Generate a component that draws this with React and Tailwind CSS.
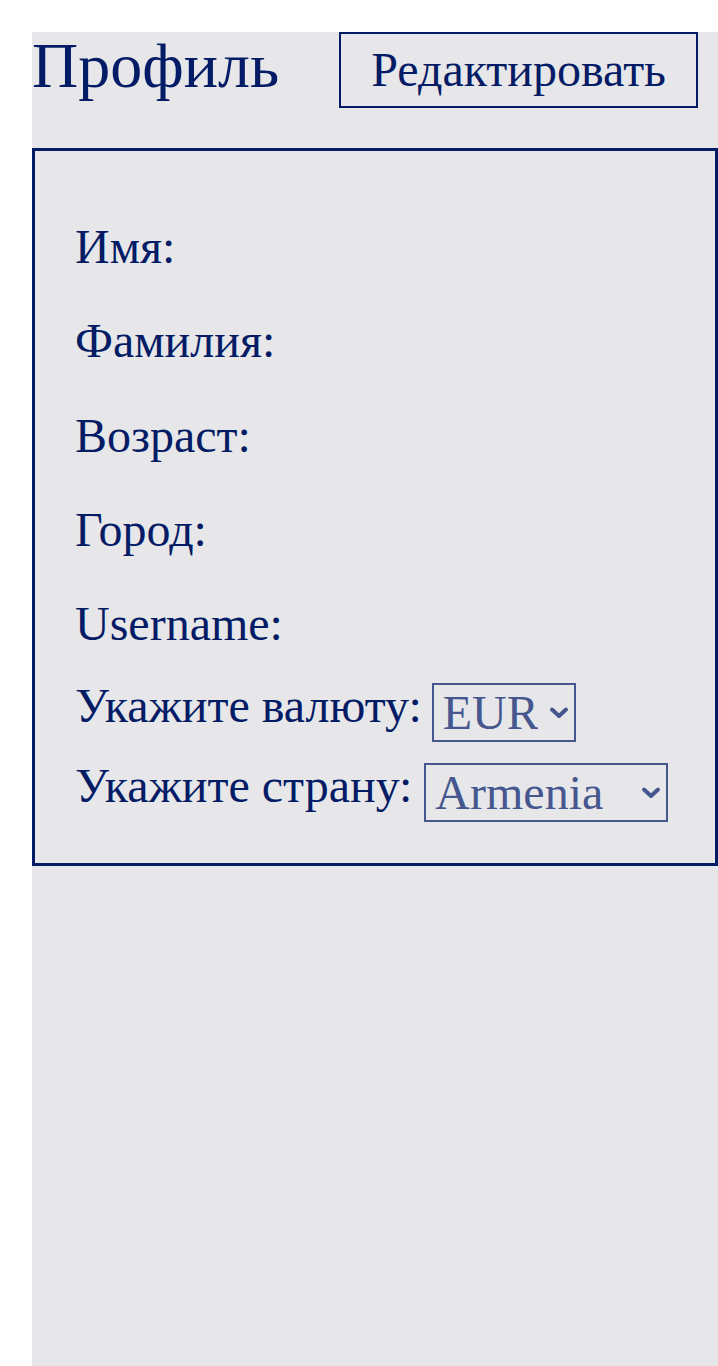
import React from 'react';

const navy = 'text-[#041b65]';

function Field({ label }) {
    return (
        <div className="h-[55px] leading-[55px] mb-[39.3px]">{label}</div>
    );
}

function Chevron() {
    return (
        <svg width="20" height="13" viewBox="0 0 20 13" className="pointer-events-none absolute right-[7px] top-1/2 -translate-y-1/2">
            <path d="M3 3 L10 9.5 L17 3" fill="none" stroke="#46578f" strokeWidth="4" strokeLinecap="round" strokeLinejoin="round" />
        </svg>
    );
}

function Picker({ value, options, width }) {
    return (
        <div className={`relative ${width}`}>
            <select
                defaultValue={value}
                className="block appearance-none w-full h-[59px] border-2 border-[#46578f] bg-transparent text-[#46578f] text-[48px] leading-[55px] pl-[9px] pr-[36px] outline-none"
                style={{ fontFamily: '"Liberation Serif", "Times New Roman", serif' }}
            >
                {options.map((o) => (
                    <option key={o} value={o}>{o}</option>
                ))}
            </select>
            <Chevron />
        </div>
    );
}

export default function App() {
    return (
        <div className="bg-white min-h-screen pt-8 pl-8" style={{ fontFamily: '"Liberation Serif", "Times New Roman", serif' }}>
            <div className={`bg-[#e7e7ea] min-h-[1334px] ${navy}`}>
                <header className="flex justify-between items-start pr-[20px]">
                    <h1 className="text-[64px] leading-none pt-[2px]">Профиль</h1>
                    <button className="border-2 border-[#041b65] px-[30px] py-[8px] text-[48px] leading-[56px]">
                        Редактировать
                    </button>
                </header>

                <section className="mt-[40px] border-[3px] border-[#041b65] pl-[40px] pt-[68px] pb-[41px] text-[48px]">
                    <Field label="Имя:" />
                    <Field label="Фамилия:" />
                    <Field label="Возраст:" />
                    <Field label="Город:" />
                    <div className="h-[55px] leading-[55px]">Username:</div>

                    <div className="flex items-end gap-[10px] mt-[27px]">
                        <span className="leading-[55px] mb-[9px]">Укажите валюту:</span>
                        <Picker value="EUR" options={['EUR', 'USD', 'RUB', 'AMD']} width="w-[144px]" />
                    </div>
                    <div className="flex items-end gap-[12px] mt-[16px]">
                        <span className="leading-[55px] mb-[9px]">Укажите страну:</span>
                        <Picker value="Armenia" options={['Armenia', 'Russia', 'Georgia']} width="w-[244px]" />
                    </div>
                </section>
            </div>
        </div>
    );
}
